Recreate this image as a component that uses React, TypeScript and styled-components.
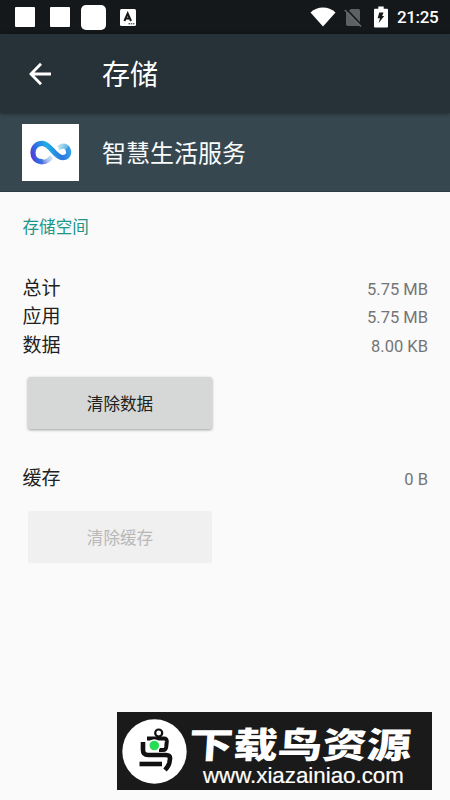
import React from 'react';
import styled, { createGlobalStyle } from 'styled-components';

const GlobalStyle = createGlobalStyle`
  * { box-sizing: border-box; }
  body { margin: 0; background: #fafafa; }
`;

const Screen = styled.div`
  display: flex;
  flex-direction: column;
  width: 450px;
  height: 800px;
  overflow: hidden;
  background: #fafafa;
  color: #212121;
  font-family: Roboto, 'Noto Sans CJK SC', sans-serif;
`;

const StatusBar = styled.div`
  display: flex;
  align-items: center;
  flex: none;
  height: 34px;
  padding: 0 11px 0 15px;
  background: #14181b;
  color: #fff;
`;

const Notice = styled.span<{ $size: number; $radius: number; $gap: number }>`
  width: ${p => p.$size}px;
  height: ${p => p.$size}px;
  margin-right: ${p => p.$gap}px;
  border-radius: ${p => p.$radius}px;
  background: #fff;
`;

const StatusIcons = styled.div`
  display: flex;
  align-items: center;
  margin-left: auto;
`;

const Spacer = styled.span<{ $width: number }>`
  width: ${p => p.$width}px;
`;

const Clock = styled.span`
  width: 42px;
  margin-left: 9px;
  font-size: 17px;
  line-height: 34px;
  font-weight: 500;
  letter-spacing: -0.35px;
  white-space: nowrap;
`;

const Toolbar = styled.header`
  display: flex;
  align-items: center;
  flex: none;
  height: 79px;
  padding: 0 0 0 28px;
  background: #263238;
  box-shadow: 0 1px 4px rgba(0, 0, 0, 0.4);
  z-index: 1;
`;

const Title = styled.h1`
  margin: 0 0 0 50px;
  padding-top: 4px;
  color: #fff;
  font-size: 28px;
  line-height: 40px;
  font-weight: 400;
`;

const AppHeader = styled.section`
  display: flex;
  align-items: center;
  flex: none;
  height: 79px;
  padding-left: 22px;
  background: #37474f;
  border-bottom: 1px solid #2c3b42;
`;

const AppIcon = styled.div`
  width: 57px;
  height: 57px;
  background: #fff;
`;

const AppName = styled.h2`
  margin: 0 0 0 23px;
  padding-top: 4px;
  color: #fafcfc;
  font-size: 24px;
  line-height: 36px;
  font-weight: 400;
`;

const Content = styled.main`
  display: flex;
  flex-direction: column;
  flex: 1;
  padding: 23px 22px 10px 22.5px;
`;

const SectionTitle = styled.h3`
  margin: 0 0 34px;
  color: #1b9688;
  font-size: 16.6px;
  line-height: 25px;
  font-weight: 400;
`;

const Row = styled.div`
  display: flex;
  justify-content: space-between;
  height: 28.4px;
`;

const Label = styled.span`
  font-size: 19px;
  line-height: 30.4px;
`;

const Value = styled.span`
  color: #757575;
  font-size: 16.5px;
  line-height: 31px;
`;

const ActionButton = styled.button<{ $gapAfter?: number }>`
  width: 184px;
  height: 52px;
  margin: 17.8px 0 ${p => p.$gapAfter ?? 0}px 5.5px;
  padding: 0;
  border: 0;
  border-radius: 2.5px;
  background: #d6d8d7;
  color: #212121;
  box-shadow: 0 1px 3px rgba(0, 0, 0, 0.38);
  font-family: inherit;
  font-size: 16.6px;
  font-weight: 400;
  &:disabled {
    background: #f0f0f0;
    color: #b8b8b8;
    box-shadow: none;
  }
`;

const Watermark = styled.aside`
  display: flex;
  align-items: center;
  width: 315px;
  height: 78px;
  margin-top: auto;
  margin-left: 94.5px;
  padding-left: 5px;
  background: #1a1a1a;
  color: #fff;
`;

const WatermarkText = styled.div`
  display: flex;
  flex-direction: column;
  padding-top: 6px;
  margin-left: 2px;
`;

const Brand = styled.div`
  height: 43px;
  font-family: 'Noto Sans CJK SC', sans-serif;
  font-size: 44.5px;
  line-height: 43px;
  font-weight: 900;
  white-space: nowrap;
  transform: scaleY(0.8) skewX(-3deg);
`;

const Site = styled.div`
  margin-left: 14px;
  font-family: 'Liberation Sans', sans-serif;
  font-size: 22.3px;
  line-height: 24px;
  -webkit-text-stroke: 0.2px #fff;
`;

const LanguageIcon = () => (
  <svg width="16" height="17" viewBox="0 0 16 17">
    <rect width="16" height="17" rx="1.5" fill="#fff" />
    <path d="M4.4 12 7.7 4.5 11 12M5.6 9.5h4.2" fill="none" stroke="#14181b" strokeWidth="2" />
    <path d="M8.5 14.8h6.5" stroke="#14181b" strokeWidth="1" strokeDasharray="1.5 .7" />
  </svg>
);

const WifiIcon = () => (
  <svg width="26" height="20" viewBox="0 0 26 20">
    <path d="M.5 5.4Q6 .6 13 .6t12.5 4.8L13 19.5Z" fill="#fff" />
  </svg>
);

const NoSimIcon = () => (
  <svg width="18" height="19" viewBox="0 0 18 19">
    <path d="M2 5v11.2Q2 18 3.8 18h10.7Q16 18 16 16.4V2.5Q16 1 14.5 1H7L2 5Z" fill="#5e6163" />
    <path d="M2.3 1.2 18 17.5" stroke="#14181b" strokeWidth="1.8" />
    <path d="m.8 2 16.3 16.5" stroke="#66696b" strokeWidth="1.5" />
  </svg>
);

const BatteryIcon = () => (
  <svg width="14" height="22" viewBox="0 0 14 22">
    <path d="M4.3.5h5.4v2.3h3.4q.9 0 .9.9v16.9q0 .9-.9.9H.9q-.9 0-.9-.9V3.7q0-.9.9-.9h3.4Z" fill="#fff" />
    <path d="M5.3 6.4h4.2L8.2 10h2l-5.5 7 1.3-4.7H3.6Z" fill="#14181b" />
  </svg>
);

const BackIcon = () => (
  <svg width="24" height="24" viewBox="0 0 24 24" fill="none" stroke="#fff" strokeWidth="2.8">
    <path d="M13 1.8 3 12l10 10.2M3 12h20" />
  </svg>
);

const LoopLogo = () => (
  <svg width="57" height="57" viewBox="0 0 57 57" fill="none">
    <defs>
      <linearGradient id="ribbon" x1="8" y1="36" x2="49" y2="24" gradientUnits="userSpaceOnUse">
        <stop stopColor="#6426d0" />
        <stop offset=".22" stopColor="#2c73e4" />
        <stop offset=".48" stopColor="#20aee5" />
        <stop offset=".72" stopColor="#2d76df" />
        <stop offset="1" stopColor="#35a5e8" />
      </linearGradient>
      <linearGradient id="leftTail" x1="17" y1="38" x2="31" y2="31" gradientUnits="userSpaceOnUse">
        <stop stopColor="#5b39d5" />
        <stop offset=".5" stopColor="#9cbcee" />
        <stop offset="1" stopColor="#e5f7fa" />
      </linearGradient>
      <linearGradient id="rightTail" x1="36" y1="23" x2="48" y2="28" gradientUnits="userSpaceOnUse">
        <stop stopColor="#c5e6ef" />
        <stop offset="1" stopColor="#309de4" />
      </linearGradient>
    </defs>
    <path d="M18 37.7Q26 39 29.5 32.5" stroke="url(#leftTail)" strokeWidth="4.6" />
    <path d="M36.5 24Q42.5 19.8 46.2 25" stroke="url(#rightTail)" strokeWidth="4.8" />
    <path d="M20.5 37.7C13.5 37.7 11 33.2 11 28.7C11 23 15.2 19.3 20.2 19.3C28.5 19.3 32.5 33.6 40.5 33.6C44.7 33.6 46.7 31.2 46.7 28.3Q46.7 25.8 45 24.2" stroke="url(#ribbon)" strokeWidth="5.2" />
  </svg>
);

const BirdLogo = () => (
  <svg width="65" height="66" viewBox="0 0 65 66" fill="none">
    <circle cx="32.5" cy="33.5" r="32.2" fill="#fff" />
    <circle cx="36.7" cy="15" r="3.5" stroke="#111" strokeWidth="2.2" />
    <path d="M25 20.5h17q3 0 2.8 3l-.6 5.5q-.4 3-3 3H37" stroke="#111" strokeWidth="4" />
    <path d="M21 24v8q0 5 5 5h18q4.5 0 4 4l-.7 4q-.6 3-4.3 7" stroke="#111" strokeWidth="4.6" />
    <path d="M17.5 46h22.5" stroke="#111" strokeWidth="4.6" />
    <circle cx="32.3" cy="27.5" r="6.2" fill="#fff" />
    <circle cx="32.3" cy="27.5" r="4.8" fill="#25dc55" />
  </svg>
);

const totals = [
  { label: '总计', value: '5.75 MB' },
  { label: '应用', value: '5.75 MB' },
  { label: '数据', value: '8.00 KB' },
];

export default function App() {
  return (
    <>
      <GlobalStyle />
      <Screen>
        <StatusBar>
          <Notice $size={20} $radius={1} $gap={15} />
          <Notice $size={20} $radius={1} $gap={11} />
          <Notice $size={25} $radius={5} $gap={14} />
          <LanguageIcon />
          <StatusIcons>
            <WifiIcon />
            <Spacer $width={8} />
            <NoSimIcon />
            <Spacer $width={12} />
            <BatteryIcon />
            <Clock>21:25</Clock>
          </StatusIcons>
        </StatusBar>
        <Toolbar>
          <BackIcon />
          <Title>存储</Title>
        </Toolbar>
        <AppHeader>
          <AppIcon><LoopLogo /></AppIcon>
          <AppName>智慧生活服务</AppName>
        </AppHeader>
        <Content>
          <SectionTitle>存储空间</SectionTitle>
          {totals.map(item => (
            <Row key={item.label}>
              <Label>{item.label}</Label>
              <Value>{item.value}</Value>
            </Row>
          ))}
          <ActionButton $gapAfter={35.5}>清除数据</ActionButton>
          <Row>
            <Label>缓存</Label>
            <Value>0 B</Value>
          </Row>
          <ActionButton disabled>清除缓存</ActionButton>
          <Watermark>
            <BirdLogo />
            <WatermarkText>
              <Brand>下载鸟资源</Brand>
              <Site>www.xiazainiao.com</Site>
            </WatermarkText>
          </Watermark>
        </Content>
      </Screen>
    </>
  );
}
